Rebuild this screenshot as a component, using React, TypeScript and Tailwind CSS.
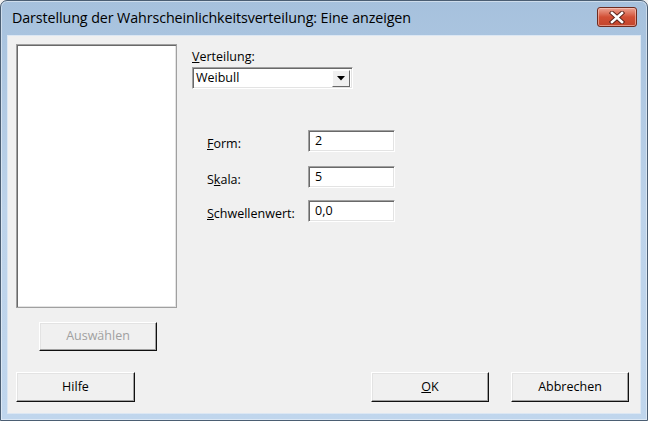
import React from "react";

const font = { fontFamily: '"Open Sans", "Noto Sans", "Liberation Sans", sans-serif' };

function Btn({ children, disabled, className }: { children: React.ReactNode; disabled?: boolean; className?: string }) {
  return (
    <div
      className={
        "flex items-center justify-center bg-[#f0f0f0] border-t border-l border-t-white border-l-white border-r border-b border-r-[#101010] border-b-[#101010] shadow-[inset_-1px_-1px_0_#a0a0a0,inset_1px_1px_0_#e3e3e3] text-[12.5px] " +
        (disabled ? "text-[#a0a0a0] " : "text-black ") +
        (className ?? "")
      }
    >
      {children}
    </div>
  );
}

function Field({ value }: { value: string }) {
  return (
    <div className="w-[87px] h-[22px] bg-white border-t border-l border-t-[#a0a0a0] border-l-[#a0a0a0] border-r border-b border-r-white border-b-white shadow-[inset_1px_1px_0_#696969,inset_-1px_-1px_0_#e3e3e3] flex items-center pl-[6px] text-[12.5px] text-black">
      {value}
    </div>
  );
}

export default function App() {
  return (
    <div className="w-[648px] h-[421px] bg-[#f0f0f0]" style={font}>
      <div className="w-[648px] h-[421px] flex flex-col rounded-t-[7px] border border-[#4b5e73] bg-gradient-to-b from-[#a6c1dd] via-[#bdd3ea] to-[#c0d6ed] shadow-[inset_0_0_0_1px_rgba(255,255,255,0.45)] overflow-hidden">
        {/* Title bar */}
        <div className="h-[35px] flex items-center justify-between pl-[11px] pr-[10px] shrink-0">
          <div className="text-[14.3px] text-black tracking-[-0.1px] pb-[1px]">
            Darstellung der Wahrscheinlichkeitsverteilung: Eine anzeigen
          </div>
          <div className="w-[40px] h-[20px] mb-[3px] rounded-[3px] border border-[#6e2b1f] bg-gradient-to-b from-[#eba292] via-[#d24f35] to-[#c2452c] shadow-[inset_0_0_0_1px_rgba(255,220,210,0.5)] flex items-center justify-center">
            <svg width="16" height="13" viewBox="0 0 16 13">
              <path d="M3 2 L13 11 M13 2 L3 11" stroke="#5a2118" strokeWidth="4.4" strokeLinecap="square" />
              <path d="M3 2 L13 11 M13 2 L3 11" stroke="#ffffff" strokeWidth="2.6" strokeLinecap="square" />
            </svg>
          </div>
        </div>

        {/* Content */}
        <div className="mx-[7px] mb-[7px] flex-1 bg-[#f0f0f0] flex flex-col shadow-[0_0_0_1px_#dce7f3] text-[12.5px] text-black">
          <div className="flex pt-[8px] pl-[8px]">
            {/* Left column */}
            <div className="flex flex-col w-[161px]">
              <div className="h-[264px] bg-white border border-[#a0a0a0] shadow-[inset_1px_1px_0_#696969,inset_-1px_-1px_0_#e3e3e3]" />
              <Btn disabled className="mt-[14px] ml-[23px] w-[118px] h-[29px]">Auswählen</Btn>
            </div>

            {/* Right column */}
            <div className="flex flex-col ml-[15px]">
              <div className="mt-[5px] leading-[16px]">
                <u>V</u>erteilung:
              </div>
              <div className="mt-[2px] w-[161px] h-[22px] bg-white border-t border-l border-t-[#a0a0a0] border-l-[#a0a0a0] border-r border-b border-r-white border-b-white shadow-[inset_1px_1px_0_#696969,inset_-1px_-1px_0_#e3e3e3] flex items-center justify-between pl-[3px] pr-[2px]">
                <span>Weibull</span>
                <div className="w-[18px] h-[17px] bg-[#f0f0f0] border-t border-l border-t-white border-l-white border-r border-b border-r-[#696969] border-b-[#696969] flex items-center justify-center">
                  <svg width="8" height="5" viewBox="0 0 8 5">
                    <path d="M0 0 H8 L4 4.5 Z" fill="#000" />
                  </svg>
                </div>
              </div>

              <div className="mt-[41px] ml-[15px] flex flex-col">
                <div className="flex items-start h-[22px]">
                  <div className="w-[101px] h-[22px] pt-[6px] leading-[16px]"><u>F</u>orm:</div>
                  <Field value="2" />
                </div>
                <div className="flex items-start h-[22px] mt-[14px]">
                  <div className="w-[101px] h-[22px] pt-[6px] leading-[16px]">S<u>k</u>ala:</div>
                  <Field value="5" />
                </div>
                <div className="flex items-start h-[22px] mt-[12px]">
                  <div className="w-[101px] h-[22px] pt-[6px] leading-[16px]"><u>S</u>chwellenwert:</div>
                  <Field value="0,0" />
                </div>
              </div>
            </div>
          </div>

          {/* Bottom buttons */}
          <div className="mt-auto mb-[11px] flex items-center justify-between pl-[8px] pr-[11px]">
            <Btn className="w-[119px] h-[30px]">Hilfe</Btn>
            <div className="flex gap-[22px]">
              <Btn className="w-[118px] h-[30px]"><u>O</u>K</Btn>
              <Btn className="w-[118px] h-[30px]">Abbrechen</Btn>
            </div>
          </div>
        </div>
      </div>
    </div>
  );
}
